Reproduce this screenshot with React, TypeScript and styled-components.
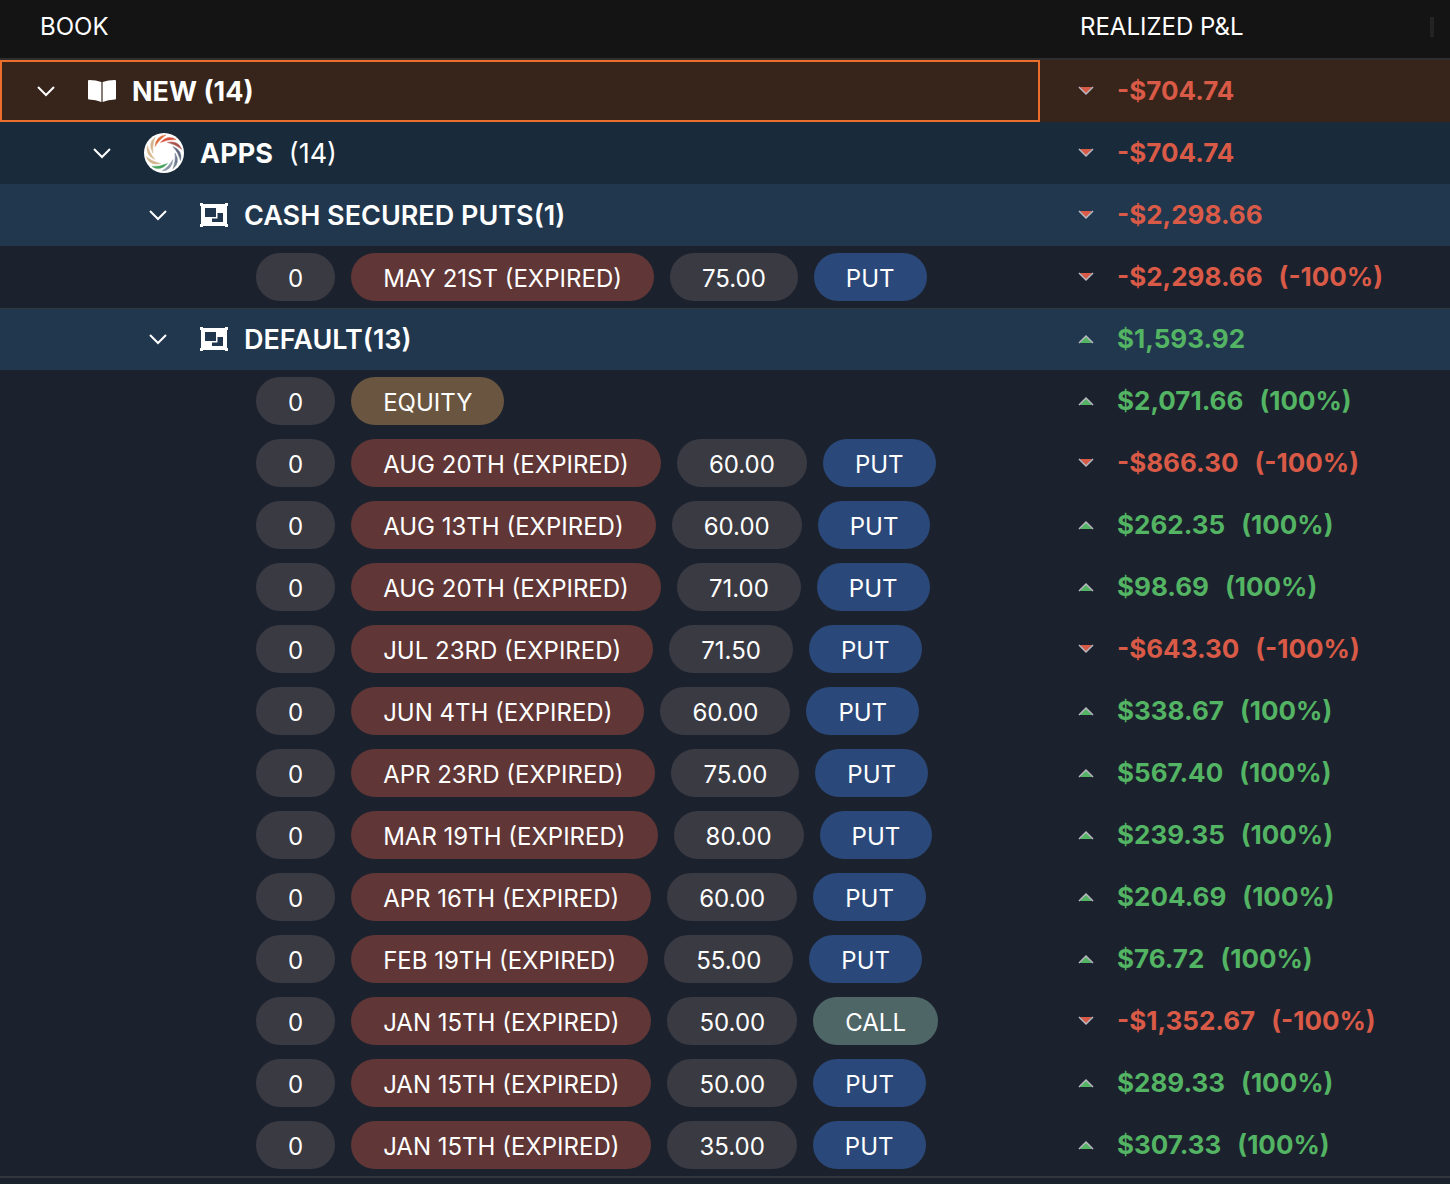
import React, { useState } from "react";
import styled, { createGlobalStyle } from "styled-components";

const GlobalStyle = createGlobalStyle`
  *, *::before, *::after { box-sizing: border-box; }
  body {
    margin: 0;
    background: #1c222d;
    color: #fff;
    font-family: Inter, "Liberation Sans", sans-serif;
  }
`;

type RowKind = "book" | "app" | "group" | "leaf";
type Tone = "neutral" | "expired" | "equity" | "put" | "call";

const rowColors: Record<RowKind, string> = {
  book: "#37241a",
  app: "#192b3a",
  group: "#21374e",
  leaf: "#1c222d",
};

const toneColors: Record<Tone, string> = {
  neutral: "#3a3a43",
  expired: "#603636",
  equity: "#6a5640",
  put: "#2a4879",
  call: "#4f6667",
};

const Table = styled.table`
  width: 100%;
  table-layout: fixed;
  border-collapse: separate;
  border-spacing: 0;
  border-bottom: 2px solid #34363d;
`;

const BookColumn = styled.col`
  width: 1040px;
`;

const HeadCell = styled.th`
  height: 60px;
  padding: 0 40px 4px;
  background: #141414;
  border-bottom: 2px solid #2e2e2e;
  font-size: 24px;
  font-weight: 400;
  line-height: 28px;
  text-align: left;
`;

const HeadContent = styled.div`
  display: flex;
  align-items: center;
  justify-content: space-between;
`;

const ResizeHandle = styled.span`
  width: 4px;
  height: 20px;
  margin-right: -24px;
  background: #242424;
`;

const Row = styled.tr<{ $kind: RowKind }>`
  background: ${(p) => rowColors[p.$kind]};
`;

const Cell = styled.td<{ $ruled?: boolean }>`
  height: 62px;
  padding: 0 0 0 38px;
  box-shadow: ${(p) => (p.$ruled ? "inset 0 1px 0 #34383f" : "none")};
`;

const BookCell = styled(Cell)<{ $level: number; $selected?: boolean }>`
  padding: 0 0 0 ${(p) => 32 + p.$level * 56}px;
  ${(p) => p.$selected && "box-shadow: inset 0 0 0 2px #ec6e2c;"}
`;

const NodeLine = styled.div`
  display: flex;
  align-items: center;
  gap: 16px;
`;

const Toggle = styled.button`
  display: flex;
  align-items: center;
  justify-content: center;
  width: 28px;
  height: 28px;
  margin-right: 12px;
  padding: 0;
  border: 0;
  background: none;
  color: inherit;
  cursor: pointer;
`;

const Label = styled.span<{ $weight: number }>`
  padding-top: 2px;
  font-size: 27px;
  font-weight: ${(p) => p.$weight};
  line-height: 32px;
`;

const Pill = styled.span<{ $tone: Tone }>`
  height: 48px;
  padding: 4px 32px 0;
  border-radius: 24px;
  background: ${(p) => toneColors[p.$tone]};
  font-size: 24px;
  font-weight: 400;
  line-height: 44px;
  white-space: nowrap;
`;

const Money = styled.div<{ $loss: boolean }>`
  display: flex;
  align-items: center;
  gap: 16px;
  color: ${(p) => (p.$loss ? "#d85a47" : "#53b463")};
  font-size: 26px;
  font-weight: 700;
  line-height: 32px;
  white-space: nowrap;
`;

const Trend = styled.svg`
  flex: none;
  margin-right: 7px;
`;

const BookIcon = () => (
  <svg width="28" height="24" viewBox="0 0 28 24" fill="#fff" aria-hidden="true">
    <path d="M0 2Q0 .8 1.2.9 8 1 13.4 3V23Q8 21 1 20.600 0 20.600 0 19.500Z" />
    <path d="M28 2Q28 .8 26.800.9 20 1 14.600 3V23Q20 21 27 20.600 28 20.600 28 19.500Z" />
  </svg>
);

const GroupIcon = () => (
  <svg width="28" height="24" viewBox="0 0 28 24" fill="#fff" aria-hidden="true">
    <path
      fillRule="evenodd"
      d="M0 0H3V1H25V0H28V3H27V21H28V24H25V23H3V24H0V21H1V3H0ZM5 5V14H16V5ZM17.500 10V15.500H12V19H23V10Z"
    />
  </svg>
);

const blades = ["#dd6b35", "#d9503c", "#a8504a", "#59667c", "#6d7b8e", "#8795a5", "#46a35c", "#d2b48c", "#d8b991", "#d2b48c"];

const AppLogo = () => (
  <svg width="40" height="40" viewBox="0 0 40 40" aria-hidden="true">
    <circle cx="20" cy="20" r="20" fill="#fff" />
    {blades.map((color, i) => (
      <path
        key={i}
        d="M22 2Q12 2.500 11 13.500Q15 6.500 22 2Z"
        fill={color}
        stroke={color}
        strokeWidth=".4"
        transform={`rotate(${i * 36} 20 20)`}
      />
    ))}
  </svg>
);

const Chevron = () => (
  <svg width="18" height="12" viewBox="0 0 18 12" fill="none" stroke="#fff" strokeWidth="2" aria-hidden="true">
    <path d="M1 2L9 10L17 2" />
  </svg>
);

interface ValueProps {
  amount: string;
  percent?: boolean;
}

const Value = ({ amount, percent }: ValueProps) => {
  const loss = amount.startsWith("-");
  return (
    <Money $loss={loss}>
      <Trend width="16" height="10" viewBox="0 0 16 10" aria-hidden="true">
        <path d={loss ? "M2 1H14L8 8Z" : "M2 9H14L8 2Z"} fill="currentColor" />
        <path d={loss ? "M1 1L8 8L15 1" : "M1 9L8 2L15 9"} fill="none" stroke="#b9b9c2" strokeWidth="1.500" />
      </Trend>
      <span>{amount}</span>
      {percent && <span>{loss ? "(-100%)" : "(100%)"}</span>}
    </Money>
  );
};

interface Position {
  expiry?: string;
  strike?: string;
  side?: "PUT" | "CALL";
  amount: string;
}

const cashSecured: Position[] = [{ expiry: "MAY 21ST", strike: "75.00", side: "PUT", amount: "-$2,298.66" }];

const defaults: Position[] = [
  { amount: "$2,071.66" },
  { expiry: "AUG 20TH", strike: "60.00", side: "PUT", amount: "-$866.30" },
  { expiry: "AUG 13TH", strike: "60.00", side: "PUT", amount: "$262.35" },
  { expiry: "AUG 20TH", strike: "71.00", side: "PUT", amount: "$98.69" },
  { expiry: "JUL 23RD", strike: "71.50", side: "PUT", amount: "-$643.30" },
  { expiry: "JUN 4TH", strike: "60.00", side: "PUT", amount: "$338.67" },
  { expiry: "APR 23RD", strike: "75.00", side: "PUT", amount: "$567.40" },
  { expiry: "MAR 19TH", strike: "80.00", side: "PUT", amount: "$239.35" },
  { expiry: "APR 16TH", strike: "60.00", side: "PUT", amount: "$204.69" },
  { expiry: "FEB 19TH", strike: "55.00", side: "PUT", amount: "$76.72" },
  { expiry: "JAN 15TH", strike: "50.00", side: "CALL", amount: "-$1,352.67" },
  { expiry: "JAN 15TH", strike: "50.00", side: "PUT", amount: "$289.33" },
  { expiry: "JAN 15TH", strike: "35.00", side: "PUT", amount: "$307.33" },
];

const PositionRow = ({ expiry, strike, side, amount }: Position) => (
  <Row $kind="leaf">
    <BookCell $level={4}>
      <NodeLine>
        <Pill $tone="neutral">0</Pill>
        <Pill $tone={expiry ? "expired" : "equity"}>{expiry ? `${expiry} (EXPIRED)` : "EQUITY"}</Pill>
        {strike && <Pill $tone="neutral">{strike}</Pill>}
        {side && <Pill $tone={side === "PUT" ? "put" : "call"}>{side}</Pill>}
      </NodeLine>
    </BookCell>
    <Cell>
      <Value amount={amount} percent />
    </Cell>
  </Row>
);

interface BranchProps {
  kind: RowKind;
  level: number;
  icon: React.ReactNode;
  name: string;
  count?: string;
  weight: number;
  amount: string;
  selected?: boolean;
  ruled?: boolean;
  children: React.ReactNode;
}

const Branch = ({ kind, level, icon, name, count, weight, amount, selected, ruled, children }: BranchProps) => {
  const [open, setOpen] = useState(true);
  return (
    <>
      <Row $kind={kind}>
        <BookCell $level={level} $selected={selected} $ruled={ruled}>
          <NodeLine>
            <Toggle type="button" aria-expanded={open} aria-label={name} onClick={() => setOpen(!open)}>
              <Chevron />
            </Toggle>
            {icon}
            <Label $weight={weight}>{name}</Label>
            {count && <Label $weight={400}>{count}</Label>}
          </NodeLine>
        </BookCell>
        <Cell $ruled={ruled}>
          <Value amount={amount} />
        </Cell>
      </Row>
      {open && children}
    </>
  );
};

export default function App() {
  return (
    <>
      <GlobalStyle />
      <Table>
        <colgroup>
          <BookColumn />
          <col />
        </colgroup>
        <thead>
          <tr>
            <HeadCell scope="col">BOOK</HeadCell>
            <HeadCell scope="col">
              <HeadContent>
                REALIZED P&amp;L
                <ResizeHandle />
              </HeadContent>
            </HeadCell>
          </tr>
        </thead>
        <tbody>
          <Branch kind="book" level={0} icon={<BookIcon />} name="NEW (14)" weight={700} amount="-$704.74" selected>
            <Branch kind="app" level={1} icon={<AppLogo />} name="APPS" count="(14)" weight={700} amount="-$704.74">
              <Branch kind="group" level={2} icon={<GroupIcon />} name="CASH SECURED PUTS(1)" weight={600} amount="-$2,298.66">
                {cashSecured.map((p, i) => (
                  <PositionRow key={i} {...p} />
                ))}
              </Branch>
              <Branch kind="group" level={2} icon={<GroupIcon />} name="DEFAULT(13)" weight={600} amount="$1,593.92" ruled>
                {defaults.map((p, i) => (
                  <PositionRow key={i} {...p} />
                ))}
              </Branch>
            </Branch>
          </Branch>
        </tbody>
      </Table>
    </>
  );
}
